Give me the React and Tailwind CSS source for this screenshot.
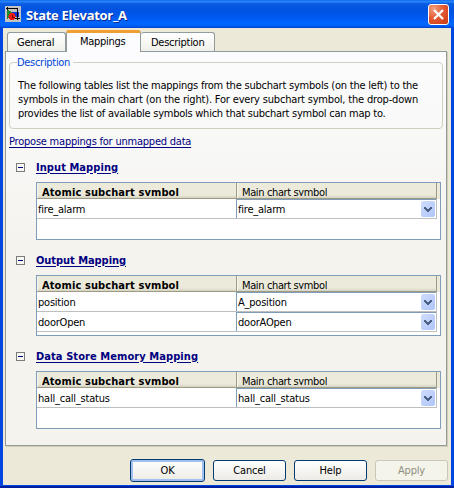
function Header({ main }) {
  return (
    <div className="flex h-[16px] border-b border-[#9d9a86] bg-gradient-to-b from-[#ebeadb] from-80% to-[#d6d2c2]">
      <div className={(main ? "tracking-[-0.37px]" : "font-bold tracking-[0.1px]") + " flex h-[15px] w-[199px] border-l border-[#f8f7ef] pl-[4px]"}>
        <span className="mt-[2px] h-[11px] overflow-hidden leading-[16px]">{main ? "Main chart symbol" : "Atomic subchart symbol"}</span>
      </div>
    </div>
  );
}

function ArrowButton() {
  return (
    <div className="mt-[1px] mr-px ml-auto flex h-[16px] w-[14px] items-center justify-center rounded-[2px] bg-gradient-to-br from-[#d0dcfb] to-[#adc5fa]">
      <svg width="10" height="7" viewBox="0 0 10 7" shapeRendering="crispEdges">
        <path d="M1 1.2 L5 5 L9 1.2" fill="none" stroke="#4d6185" strokeWidth="2.2" />
      </svg>
    </div>
  );
}

function MappingTable({ rows, heightClass }) {
  return (
    <div className={"ml-[30px] w-[405px] border border-[#7f9db9] bg-white tracking-[-0.22px] " + heightClass}>
      <div className="flex bg-[#ebeadb]">
        <div className="w-[200px] border-r border-[#9d9a86]">
          <Header />
        </div>
        <div className="w-[200px] border-r border-[#9d9a86]">
          <Header main />
        </div>
        <div className="h-[16px] flex-1" />
      </div>
      {rows.map(([left, right]) => (
        <div key={left} className="flex h-[20px] w-[400px] border-r border-b border-[#bfbfbf]">
          <div className="w-[199px] pt-px pl-[1px] leading-[19px]">{left}</div>
          <div className="flex w-[200px] border-t border-l border-[#7f9db9] pl-[1px] leading-[18px]">
            <span className="leading-[19px]">{right}</span>
            <ArrowButton />
          </div>
        </div>
      ))}
    </div>
  );
}

function SectionTitle({ children, trackClass }) {
  return (
    <div className="flex h-[16px] items-center pl-[10px]">
      <div className="mr-[11px] flex h-[9px] w-[9px] items-center justify-center border border-[#7b7b7b] bg-[#f7f7f3]">
        <div className="h-px w-[5px] bg-[#000080]" />
      </div>
      <span className={"mt-px font-bold text-[#000080] underline decoration-1 underline-offset-[2px] " + trackClass}>{children}</span>
    </div>
  );
}

export default function App() {
  return (
    <div className="flex h-[488px] w-[454px] flex-col overflow-hidden bg-[linear-gradient(to_bottom,#0046e0_0,#0046e0_486px,#001ea0_486px)] font-['DejaVu_Sans_Condensed','DejaVu_Sans',sans-serif] text-[11px] leading-[14px] whitespace-nowrap text-black [font-stretch:condensed]">
      <div className="flex h-[28px] shrink-0 items-center bg-[linear-gradient(to_bottom,#0a5be8_0%,#2a8bff_4%,#0a5be0_14%,#0053e0_35%,#0058ee_60%,#0066ff_82%,#0062f8_92%,#0040c8_100%)] pl-[5px]">
        <svg width="16" height="16" viewBox="0 0 16 16" shapeRendering="crispEdges">
          <rect width="16" height="16" fill="#c4c4c4" />
          <path d="M2 3 L8 7 L2 14 Z" fill="#1e8a2c" />
          <rect x="7" y="6" width="7" height="5" fill="#1034d8" />
          <circle cx="7" cy="10.5" r="3.6" fill="#ee1c10" />
          <path d="M7.5 8.5 V11 H10" stroke="#700" fill="none" />
          <path d="M1 2.5 H12.5 V14 M2.5 1 V4 M10 12.5 H15" stroke="#000" fill="none" />
        </svg>
        <span className="mt-px ml-[5px] font-['Open_Sans','Noto_Sans',sans-serif] text-[13px] leading-[18px] font-bold tracking-[-0.3px] text-white [font-stretch:normal] [text-shadow:1px_1px_0_#0a2a8c]">State Elevator_A</span>
        <div className="mt-[1px] mr-[5px] ml-auto flex h-[21px] w-[21px] items-center justify-center rounded-[3px] border border-white bg-[radial-gradient(circle_at_25%_20%,#f0a080,#e35a35_45%,#c93a10)]">
          <svg width="13" height="13" viewBox="0 0 13 13">
            <path d="M2 2 L11 11 M11 2 L2 11" stroke="#fff" strokeWidth="2.2" />
          </svg>
        </div>
      </div>
      <div className="mr-[3px] ml-[3px] flex h-[457px] shrink-0 flex-col bg-[#ece9d8] pt-[2px] pl-[2px]">
        <div className="z-10 flex h-[22px] items-start pl-[2px] tracking-[-0.27px]">
          <div className="mt-[2px] h-[19px] w-[59px] rounded-t-[3px] border border-b-0 border-[#919b9c] bg-gradient-to-b from-white to-[#f0f0ea] pt-[3px] pl-[9px]">General</div>
          <div className="h-[22px] w-[75px] rounded-t-[3px] border border-t-[3px] border-b-0 border-[#919b9c] border-t-[#f0a030] bg-[#fcfcfe] pt-[2px] pl-[13px]">Mappings</div>
          <div className="mt-[2px] h-[19px] w-[74px] rounded-t-[3px] border border-b-0 border-l-0 border-[#919b9c] bg-gradient-to-b from-white to-[#f0f0ea] pt-[3px] pl-[10px]">Description</div>
        </div>
        <div className="-mt-px h-[395px] w-[442px] border border-[#919b9c] bg-gradient-to-b from-[#fcfcfe] to-[#f4f3ee] to-50% shadow-[1px_1px_0_#d0ceb8]">
          <div className="mt-[10px] ml-[3px] h-[67px] w-[434px] rounded-[4px] border border-[#d0d0bf] pl-[7px]">
            <div className="-mt-[7px] w-[56px] bg-[#fbfbfd] tracking-[-0.3px] text-[#0046d5]">Description</div>
            <div className="mt-[9px] pl-[1px]">
              <div className="tracking-[-0.22px]">The following tables list the mappings from the subchart symbols (on the left) to the</div>
              <div className="tracking-[-0.18px]">symbols in the main chart (on the right). For every subchart symbol, the drop-down</div>
              <div className="tracking-[-0.25px]">provides the list of available symbols which that subchart symbol can map to.</div>
            </div>
          </div>
          <div className="mt-[6px] ml-[3px] tracking-[-0.22px] text-[#000080] underline decoration-1 underline-offset-[2px]">Propose mappings for unmapped data</div>
          <div className="mt-[10px]">
            <SectionTitle trackClass="tracking-[0.07px]">Input Mapping</SectionTitle>
            <div className="mt-[7px]"><MappingTable heightClass="h-[58px]" rows={[["fire_alarm", "fire_alarm"]]} /></div>
          </div>
          <div className="mt-[12px]">
            <SectionTitle trackClass="tracking-[-0.05px]">Output Mapping</SectionTitle>
            <div className="mt-[7px]"><MappingTable heightClass="h-[61px]" rows={[["position", "A_position"], ["doorOpen", "doorAOpen"]]} /></div>
          </div>
          <div className="mt-[12px]">
            <SectionTitle trackClass="tracking-[0.08px]">Data Store Memory Mapping</SectionTitle>
            <div className="mt-[7px]"><MappingTable heightClass="h-[58px]" rows={[["hall_call_status", "hall_call_status"]]} /></div>
          </div>
        </div>
        <div className="mt-[13px] flex items-center pl-[125px] tracking-[-0.2px]">
          <button className="h-[23px] w-[75px] rounded-[3px] border border-[#003c74] bg-gradient-to-b from-white to-[#ecebe5] pt-px shadow-[inset_0_0_0_2px_#a3bff0]">OK</button>
          <button className="ml-[8px] h-[21px] w-[73px] rounded-[3px] border border-[#003c74] bg-gradient-to-b from-white to-[#ecebe5] pt-px">Cancel</button>
          <button className="ml-[8px] h-[21px] w-[73px] rounded-[3px] border border-[#003c74] bg-gradient-to-b from-white to-[#ecebe5] pt-px">Help</button>
          <button className="ml-[8px] h-[21px] w-[73px] rounded-[3px] border border-[#c9c7ba] bg-[#f5f4ea] pt-px text-[#8f8f80]">Apply</button>
        </div>
      </div>
    </div>
  );
}
